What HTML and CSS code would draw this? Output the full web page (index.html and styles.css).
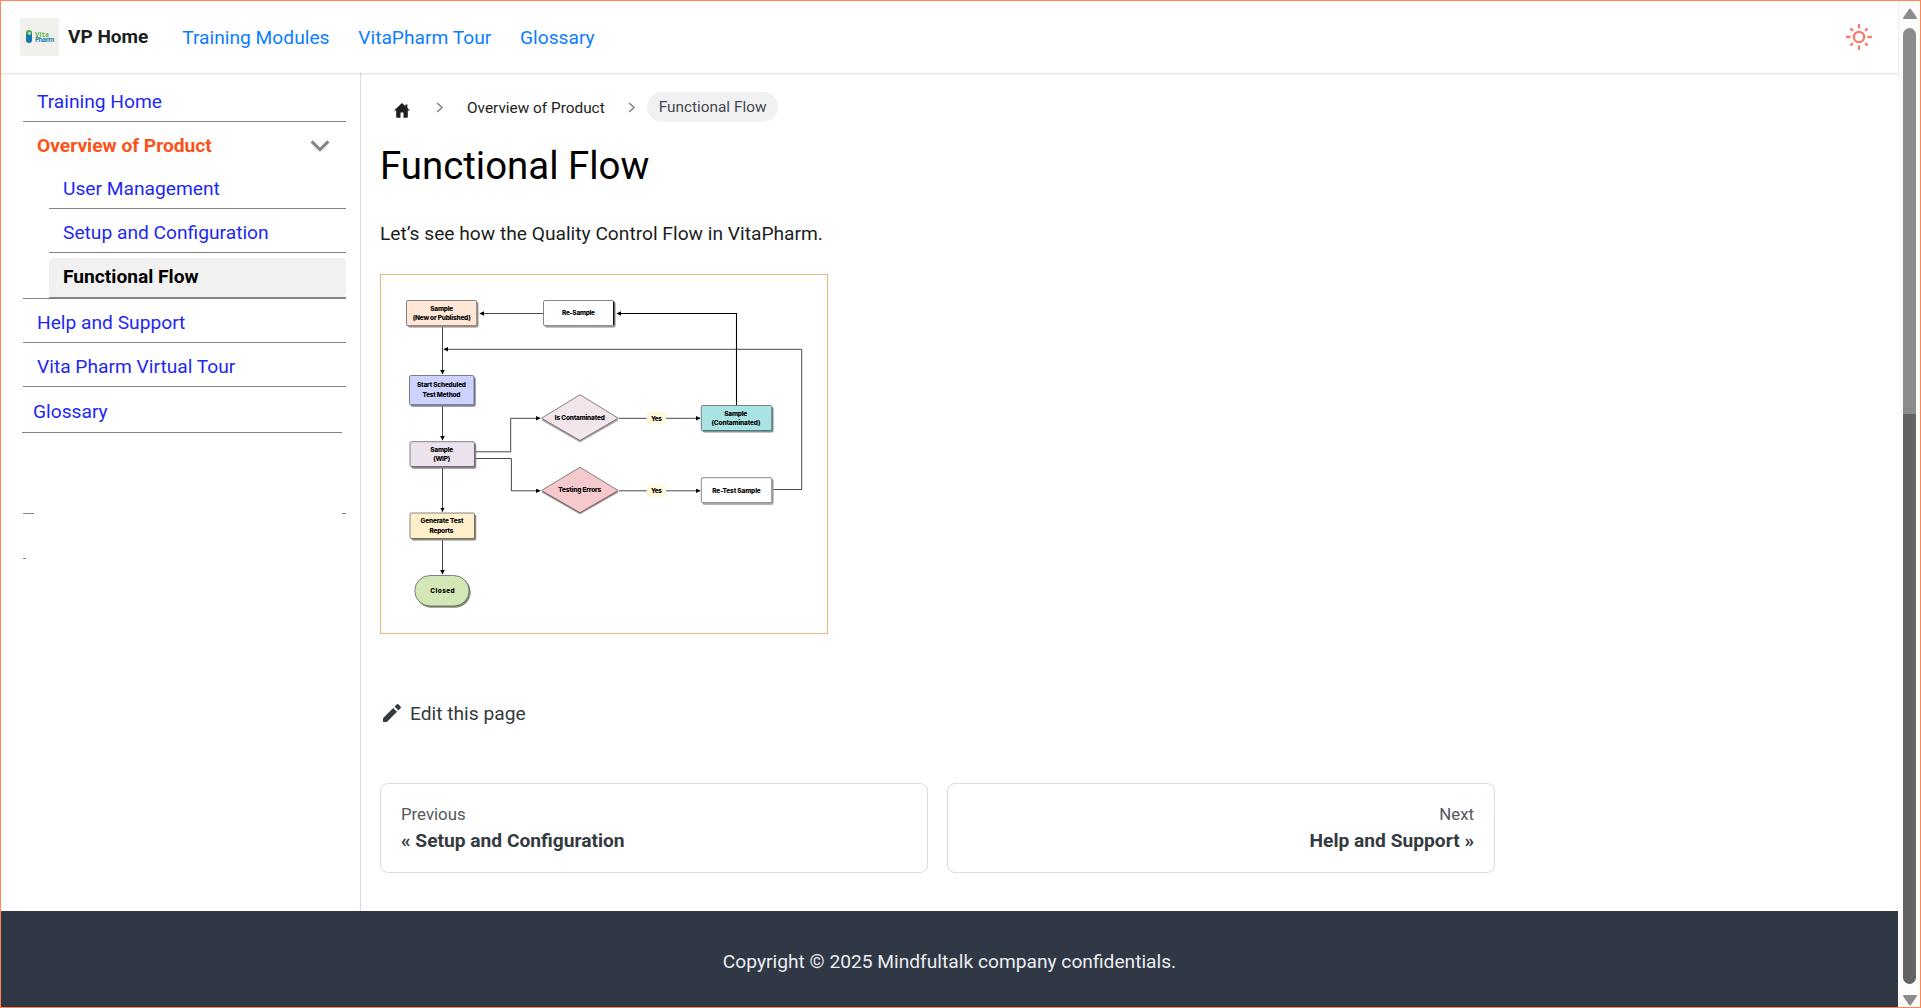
FILE: index.html
```html
<!DOCTYPE html>
<html lang="en">
<head>
<meta charset="utf-8">
<title>Functional Flow | VP Home</title>
<link rel="stylesheet" href="styles.css">
</head>
<body>
<div class="window">
  <div class="site">
    <header class="navbar">
      <a class="brand">
        <svg class="logo" width="39" height="38" viewBox="0 0 39 38">
          <rect width="39" height="38" fill="#f1f0ec"/>
          <path d="M6 18v-3a3 3 0 0 1 6 0v3z" fill="#45a845"/>
          <path d="M6 17l6-2v7a3 3 0 0 1-6 0z" fill="#1479a8"/>
          <circle cx="9.5" cy="15.5" r="1.3" fill="#e8f4e0"/>
          <text class="logo-text" x="15" y="18.5" textLength="14" fill="#58b247">Vita</text>
          <text class="logo-text" x="15" y="24.2" textLength="19.5" fill="#1c82ab">Pharm</text>
        </svg>
        <b class="brand-name">VP Home</b>
      </a>
      <nav class="nav-links">
        <a>Training Modules</a><a>VitaPharm Tour</a><a>Glossary</a>
      </nav>
      <svg class="theme" width="28" height="28" viewBox="-14 -14 28 28" fill="none" stroke="#fb7968" stroke-width="2.3" stroke-linecap="round">
        <circle r="5.1"/>
        <path d="M0-9.4V-12M0 9.4V12M-9.4 0H-12M9.4 0H12M-6.7-6.7l-1.2-1.2M6.7-6.7l1.2-1.2M-6.7 6.7l-1.2 1.2M6.7 6.7l1.2 1.2"/>
      </svg>
    </header>
    <div class="body">
      <aside class="sidebar">
        <ul class="menu">
          <li class="item"><a>Training Home</a></li>
          <li class="item group">
            <a class="open">Overview of Product
              <svg width="20" height="14" viewBox="0 0 20 14" fill="none" stroke="#868686" stroke-width="3.2"><path d="M1.6 2.4L10 10.6 18.4 2.4"/></svg>
            </a>
            <ul class="submenu">
              <li class="item"><a>User Management</a></li>
              <li class="item"><a>Setup and Configuration</a></li>
              <li class="item"><a class="active">Functional Flow</a></li>
            </ul>
          </li>
          <li class="item"><a>Help and Support</a></li>
          <li class="item"><a>Vita Pharm Virtual Tour</a></li>
          <li class="item last"><a>Glossary</a></li>
        </ul>
        <div class="stub wide"><i></i><i></i></div>
        <div class="stub short"><i></i></div>
      </aside>
      <main class="content">
        <nav class="crumbs">
          <svg class="home" width="16" height="15" viewBox="0 0 16 15"><path fill="#1c1e21" d="M8 0L0 7.4h2.2V14q0 .8.8.8h3.5V9.6h3v5.2H13q.8 0 .8-.8V7.4H16L13.4 5V1.500h-2v1.700z"/></svg>
          <svg class="sep" width="8" height="11" viewBox="0 0 8 11" fill="none" stroke="#868686" stroke-width="1.6"><path d="M1.2 1.2L6 5.5 1.2 9.8"/></svg>
          <span class="crumb">Overview of Product</span>
          <svg class="sep second" width="8" height="11" viewBox="0 0 8 11" fill="none" stroke="#868686" stroke-width="1.6"><path d="M1.2 1.2L6 5.5 1.2 9.8"/></svg>
          <span class="pill">Functional Flow</span>
        </nav>
        <h1>Functional Flow</h1>
        <p class="intro">Let’s see how the Quality Control Flow in VitaPharm.</p>
        <svg class="flow" width="448" height="360" viewBox="380 274 448 360">
          <defs>
            <marker id="tip" markerUnits="userSpaceOnUse" markerWidth="6" markerHeight="6" refX="4" refY="2.3" orient="auto"><path d="M0 0L4.6 2.3 0 4.6z" fill="#000"/></marker>
          </defs>
          <rect x="380.5" y="274.5" width="447" height="359" fill="#fff" stroke="#ecb678"/>
          <g class="wires">
            <path d="M442.5 327V374"/><path d="M442.5 406V440"/><path d="M442.5 468V511.500"/><path d="M442.500 540V574"/>
            <path d="M543 313.500H480"/>
            <path class="strong" d="M736.500 405V313.500H617"/>
            <path d="M773 489.500H801.700V349.300H444"/>
            <path d="M475 451.800H510.700V418.300H540"/>
            <path d="M475 458.500H511.400V490.800H540"/>
            <path d="M619 418.300H700"/><path d="M619 490.800H700"/>
          </g>
          <g class="shade">
            <rect x="408.200" y="302.300" width="70" height="25" rx="1.500" fill="#b79d90"/>
            <rect x="545.300" y="302.300" width="70" height="25" rx="1.500" fill="#aaa"/>
            <rect x="411" y="377.500" width="64.500" height="29" rx="1.500" fill="#868bb5"/>
            <rect x="411.700" y="443.500" width="64.300" height="25" rx="1.500" fill="#8d858f"/>
            <rect x="411.700" y="514.700" width="64.300" height="25.500" rx="1.500" fill="#958c78"/>
            <rect x="416" y="577" width="54.500" height="30.500" rx="15.200" fill="#879573"/>
            <rect x="702.800" y="407.200" width="70.500" height="25" rx="1.500" fill="#6fa0a1"/>
            <rect x="702.800" y="479.500" width="70.500" height="25" rx="1.500" fill="#b4b4b4"/>
            <path d="M542 420.300L580 396.500 618 420.300 580 442z" fill="#b3a8ad"/>
            <path d="M542 492.300L580 468.500 618 492.300 580 514z" fill="#b3868a"/>
          </g>
          <g class="nodes">
            <rect x="406.500" y="300.500" width="70.300" height="25.200" rx="1.500" fill="#ffe6d6"/>
            <rect x="543.500" y="300.500" width="70.300" height="25.200" rx="1.500" fill="#fff"/>
            <path class="edge" d="M613.700 301.500V325"/>
            <rect x="409.500" y="375.500" width="64.500" height="29.300" rx="1.500" fill="#ccd3ff"/>
            <rect x="410" y="441.700" width="64.500" height="24.800" rx="1.500" fill="#ece2ed"/>
            <rect x="410" y="513" width="64.500" height="25.500" rx="1.500" fill="#fff0cc"/>
            <rect x="414.800" y="575.500" width="54.300" height="30.500" rx="15.200" fill="#d3e8b6"/>
            <rect x="701.300" y="405.500" width="70.500" height="25" rx="1.500" fill="#aae3e3"/>
            <rect x="701.300" y="477.700" width="70.500" height="25" rx="1.500" fill="#fff"/>
            <path d="M541.500 418.200L580 394.700 618.200 418.200 580 440.500z" fill="#f2e5eb"/>
            <path d="M541.500 490.500L580 467.200 618.200 490.500 580 512.700z" fill="#f6c9cc"/>
          </g>
          <g fill="#fff9dc"><rect x="646.700" y="412" width="19.300" height="12.300" rx="1.500"/><rect x="646.700" y="484.500" width="19.300" height="12.300" rx="1.500"/></g>
          <g class="labels">
            <text x="441.700" y="310.500" textLength="23">Sample</text>
            <text x="441.700" y="319.800" textLength="58">(New or Published)</text>
            <text x="578.500" y="315.300" textLength="33">Re-Sample</text>
            <text x="441.500" y="387.300" textLength="49">Start Scheduled</text>
            <text x="441.500" y="396.700" textLength="38">Test Method</text>
            <text x="441.700" y="451.500" textLength="23">Sample</text>
            <text x="441.700" y="460.800" textLength="17">(WIP)</text>
            <text x="442" y="523.300" textLength="43">Generate Test</text>
            <text x="441.500" y="532.700" textLength="24">Reports</text>
            <text x="442.500" y="593.200" textLength="24.500">Closed</text>
            <text x="579.800" y="420" textLength="50">Is Contaminated</text>
            <text x="579.800" y="492.300" textLength="43">Testing Errors</text>
            <text x="656.500" y="420.500" textLength="11">Yes</text>
            <text x="656.500" y="492.900" textLength="11">Yes</text>
            <text x="735.700" y="415.700" textLength="23">Sample</text>
            <text x="736" y="425" textLength="49">(Contaminated)</text>
            <text x="736.500" y="492.500" textLength="48.500">Re-Test Sample</text>
          </g>
        </svg>
        <a class="edit">
          <svg width="20" height="20" viewBox="0 0 20 20" fill="#343a40"><path d="M1 15.200V19h3.800L15 8.800 11.200 5zM18.700 5.100a1 1 0 0 0 0-1.400L16.300 1.300a1 1 0 0 0-1.400 0L12.600 3.600l3.800 3.800z"/></svg>
          <span>Edit this page</span>
        </a>
        <nav class="pager">
          <a class="card"><small>Previous</small><b>« Setup and Configuration</b></a>
          <a class="card next"><small>Next</small><b>Help and Support »</b></a>
        </nav>
      </main>
    </div>
    <footer class="footer">Copyright © 2025 Mindfultalk company confidentials.</footer>
  </div>
  <div class="scrollbar">
    <svg width="16" height="12" viewBox="0 0 16 12"><path d="M8 2.500L14 11H2z" fill="#8b8b8b" stroke="#8b8b8b" stroke-width="2" stroke-linejoin="round"/></svg>
    <div class="thumb"></div>
    <svg width="16" height="12" viewBox="0 0 16 12"><path d="M8 10.500L14 2H2z" fill="#8b8b8b" stroke="#8b8b8b" stroke-width="2" stroke-linejoin="round"/></svg>
  </div>
</div>
</body>
</html>
```
FILE: styles.css
```css
* { box-sizing: border-box; }
body {
  margin: 0;
  font-family: Roboto, sans-serif;
  font-size: 19.2px;
  color: #1c1e21;
}
ul { list-style: none; margin: 0; padding: 0; }
.window {
  display: flex;
  width: 1921px;
  height: 1008px;
  border: 1px solid #ff8650;
  background: #fff;
  overflow: hidden;
}
.site { width: 1897px; display: flex; flex-direction: column; }

.navbar {
  height: 72px;
  display: flex;
  align-items: center;
  padding: 0 25px 0 19px;
  box-shadow: 0 1px 2px rgba(0, 0, 0, .14);
  z-index: 1;
  flex: none;
}
.brand { display: flex; align-items: center; gap: 9px; }
.logo { display: block; }
.logo-text { font: 700 6.5px "Open Sans", sans-serif; }
.brand-name { font-weight: 700; line-height: 24px; font-size: 19px; }
.nav-links { display: flex; gap: 28.8px; margin-left: 34px; color: #0d7dff; }
.theme { margin-left: auto; }

.body { flex: 1; display: flex; min-height: 0; }
.sidebar { width: 360px; border-right: 1px solid #dadde1; padding: 4px 14px 0 22px; flex: none; }
.menu a { display: flex; align-items: center; height: 39px; padding-left: 14px; color: #1d28f2; line-height: 24px; }
.item { border-bottom: 1px solid #878380; }
.menu > .item { padding-top: 4px; }
.menu > .item:first-child { padding-top: 5px; }
.item a.open { justify-content: space-between; padding-right: 16px; color: #fa5217; font-weight: 700; }
.submenu { margin-left: 26px; }
.submenu .item { padding-top: 4px; }
.submenu .item:last-child { padding-top: 5px; }
.item a.active { background: #f1f1f1; border-radius: 5px; color: #000; font-weight: 700; padding-bottom: 2px; }
.menu > .item.last { width: 320px; margin-left: -1px; padding: 5px 0 1px; }
.menu > .item.last a { padding-left: 11px; }
.stub { display: flex; justify-content: space-between; height: 1px; }
.stub i { height: 1px; background: #878380; }
.stub.wide { margin-top: 80px; }
.stub.wide i:first-child { width: 11px; }
.stub.wide i:last-child { width: 4px; }
.stub.short { margin-top: 44px; }
.stub.short i { width: 3px; }

.content { width: 1134px; padding: 19px 0 0 19px; }
.crumbs { height: 30px; display: flex; align-items: center; font-size: 15.36px; line-height: 24px; }
.crumb { padding-top: 1px; }
.home { margin: 7px 0 0 14px; }
.sep { margin: 0 23px 0 26px; }
.sep.second { margin: 0 11px 0 23px; }
.pill { height: 30px; line-height: 31px; border-radius: 15px; background: #f1f1f1; color: #444950; padding: 0 12px; }
h1 { margin: 20px 0 0; font-size: 38.4px; line-height: 47px; font-weight: 400; color: #000; }
.intro { margin: 33px 0 0; line-height: 24px; }
.flow { display: block; margin-top: 28px; }
.wires { fill: none; stroke: #333; stroke-width: .9; }
.wires path { marker-end: url(#tip); }
.wires .strong { stroke: #000; stroke-width: 1.1; }
.shade { stroke: #777; stroke-width: .4; }
.nodes { stroke: #444; stroke-width: .65; }
.nodes .edge { stroke: #000; stroke-width: 1.2; }
.labels { font: 800 6.5px Inter, sans-serif; text-anchor: middle; fill: #000; }
.edit { display: flex; gap: 8px; align-items: center; height: 24px; margin: 67px 0 0 2px; color: #343a40; }
.pager { display: grid; grid-template-columns: 548px 548px; gap: 19px; margin-top: 58px; }
.card { height: 90px; border: 1px solid #dadde1; border-radius: 8px; padding: 18px 20px; display: flex; flex-direction: column; color: #343a40; }
.card small { font-size: 16.8px; line-height: 24px; color: #525860; }
.card b { font-weight: 700; line-height: 30px; }
.card.next { align-items: flex-end; }

.footer { height: 96px; flex: none; background: #303846; color: #ebedf0; text-align: center; line-height: 24px; padding-top: 39px; }

.scrollbar { flex: 1; background: #fcfcfc; display: flex; flex-direction: column; align-items: center; padding: 6px 0 1px 1px; }
.thumb { flex: 1; width: 13px; margin: 9px 0 10px; border-radius: 7px; background: linear-gradient(#8b8b8b 386px, #636363 386px); }
```
